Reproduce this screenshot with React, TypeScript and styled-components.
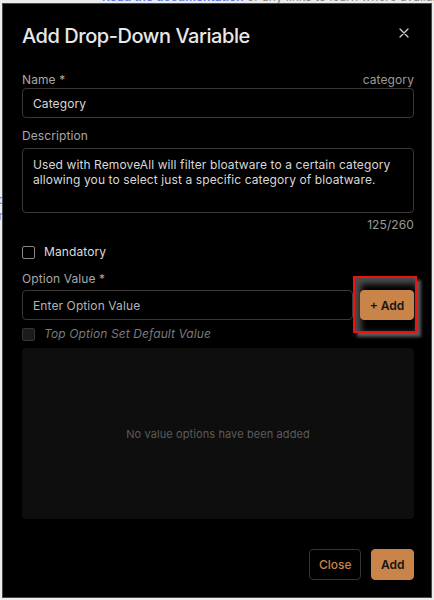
import React from "react";
import styled, { createGlobalStyle } from "styled-components";

const Global = createGlobalStyle`
  html, body { margin: 0; padding: 0; }
  body {
    background: #ececec;
    font-family: Inter, "Noto Sans", sans-serif;
    overflow: hidden;
  }
  * { box-sizing: border-box; }
`;

const ORANGE = "#c9844a";

const Backdrop = styled.div`
  height: 600px;
  background: #ececec;
  overflow: hidden;
  font-family: Inter, sans-serif;
  font-size: 12px;
`;

const TopLine = styled.p`
  margin: -10px 0 0 102px;
  white-space: nowrap;
  color: #888;
  line-height: 14px;
`;

const Link = styled.span`
  color: #5a78e8;
  font-weight: 600;
`;

const SideText = styled.div`
  margin: 188px 0 0 -30px;
  color: #8a7ac8;
  line-height: 16px;
`;

const Modal = styled.div`
  position: fixed;
  top: 3px;
  left: 2px;
  width: 430px;
  height: 595px;
  background: #000;
  border: 1px solid #4a4a4a;
  padding: 18px 17px 0 19px;
  display: flex;
  flex-direction: column;
  color: #ddd;
  letter-spacing: 0.1px;
`;

const Header = styled.div`
  display: flex;
  justify-content: space-between;
  align-items: flex-start;
  margin-bottom: 22px;
`;

const Title = styled.h2`
  margin: 0;
  font-size: 20px;
  line-height: 28px;
  font-weight: 500;
  color: #e8e8e8;
  letter-spacing: -0.45px;
`;

const CloseIcon = styled.button`
  border: 0;
  background: none;
  padding: 0;
  margin: 6px 5px 0 0;
  width: 10px;
  height: 10px;
  display: flex;
  cursor: pointer;
`;

const LabelRow = styled.div<{ $mb: number }>`
  display: flex;
  justify-content: space-between;
  margin-bottom: ${(p) => p.$mb}px;
`;

const Label = styled.label`
  font-size: 12px;
  line-height: 16px;
  color: #a8a8a8;
`;

const Hint = styled.span`
  font-size: 12px;
  line-height: 16px;
  color: #9a9a9a;
`;

const Input = styled.input`
  display: block;
  width: 100%;
  height: 30px;
  background: #000;
  border: 1px solid #3b3835;
  border-radius: 4px;
  padding: 0 10px;
  font-family: Inter, sans-serif;
  font-size: 12px;
  letter-spacing: 0.1px;
  color: #d8d8d8;
  outline: none;
  &::placeholder { color: #b4b4b4; }
`;

const TextArea = styled.textarea`
  display: block;
  width: 100%;
  height: 65px;
  background: #000;
  border: 1px solid #3b3835;
  border-radius: 4px;
  padding: 8px 10px;
  font-family: Inter, sans-serif;
  font-size: 12px;
  letter-spacing: 0.1px;
  line-height: 15px;
  color: #d8d8d8;
  resize: none;
  outline: none;
`;

const Field = styled.div<{ $mt: number }>`
  margin-top: ${(p) => p.$mt}px;
`;

const Counter = styled.div`
  text-align: right;
  font-size: 12px;
  line-height: 16px;
  color: #9a9a9a;
  margin-top: 4px;
`;

const CheckRow = styled.label<{ $mt: number; $disabled?: boolean }>`
  display: flex;
  align-items: center;
  gap: 9px;
  margin-top: ${(p) => p.$mt}px;
  font-size: 12px;
  line-height: 16px;
  color: ${(p) => (p.$disabled ? "#7a7a7a" : "#dcdcdc")};
  font-style: ${(p) => (p.$disabled ? "italic" : "normal")};
`;

const Box = styled.span<{ $disabled?: boolean }>`
  width: 13px;
  height: 13px;
  border-radius: 2px;
  border: 1px solid ${(p) => (p.$disabled ? "#343434" : "#8d8680")};
  background: ${(p) => (p.$disabled ? "#1b1b1b" : "#000")};
  flex: none;
`;

const OptionRow = styled.div`
  display: flex;
  align-items: stretch;
  gap: 7px;
`;

const AddCell = styled.div`
  position: relative;
  display: flex;
`;

const Highlight = styled.span`
  position: absolute;
  top: -14px;
  left: -7px;
  right: -3px;
  bottom: -13px;
  border: 2px solid #ee1111;
  box-shadow: 4px 4px 3px rgba(105, 105, 105, 0.85),
    inset 4px 4px 6px 2px rgba(85, 85, 85, 0.9);
  pointer-events: none;
`;

const Button = styled.button<{ $variant: "solid" | "outline" }>`
  position: relative;
  height: 30px;
  padding: 0 ${(p) => (p.$variant === "outline" ? 9 : 8.5)}px;
  border-radius: 4px;
  font-family: Inter, sans-serif;
  font-size: 12px;
  font-weight: ${(p) => (p.$variant === "outline" ? 500 : 600)};
  cursor: pointer;
  border: 1px solid ${(p) => (p.$variant === "outline" ? "#353535" : ORANGE)};
  background: ${(p) => (p.$variant === "outline" ? "#000" : ORANGE)};
  color: ${(p) => (p.$variant === "outline" ? ORANGE : "#141414")};
`;

const SmallAdd = styled(Button)`
  width: 54px;
  padding: 0;
`;

const EmptyBox = styled.div`
  margin-top: 6px;
  height: 171px;
  background: #0e0e0e;
  border-radius: 4px;
  display: flex;
  align-items: center;
  justify-content: center;
  font-size: 11px;
  color: #5c5c5c;
`;

const Footer = styled.div`
  display: flex;
  justify-content: flex-end;
  gap: 10px;
  margin-top: 30px;
`;

const FooterButton = styled(Button)`
  height: 31px;
`;

export default function App() {
  return (
    <>
      <Global />
      <Backdrop>
        <TopLine>
          <Link>Read the documentation</Link> or any links to learn where available in the editor
        </TopLine>
        <SideText>
          variables
          <br />
          options
        </SideText>
      </Backdrop>
      <Modal role="dialog">
        <Header>
          <Title>Add Drop-Down Variable</Title>
          <CloseIcon aria-label="Close">
            <svg width="10" height="10" viewBox="0 0 10 10">
              <path d="M1 1 L9 9 M9 1 L1 9" stroke="#cfcfcf" strokeWidth="1.3" strokeLinecap="round" />
            </svg>
          </CloseIcon>
        </Header>

        <LabelRow $mb={0}>
          <Label>Name *</Label>
          <Hint>category</Hint>
        </LabelRow>
        <Input defaultValue="Category" />

        <Field $mt={10}>
          <LabelRow $mb={4}>
            <Label>Description</Label>
          </LabelRow>
          <TextArea defaultValue="Used with RemoveAll will filter bloatware to a certain category allowing you to select just a specific category of bloatware." />
          <Counter>125/260</Counter>
        </Field>

        <CheckRow $mt={11}>
          <Box />
          Mandatory
        </CheckRow>

        <Field $mt={11}>
          <LabelRow $mb={3}>
            <Label>Option Value *</Label>
          </LabelRow>
          <OptionRow>
            <Input placeholder="Enter Option Value" />
            <AddCell>
              <Highlight />
              <SmallAdd $variant="solid">+ Add</SmallAdd>
            </AddCell>
          </OptionRow>
        </Field>

        <CheckRow $mt={6} $disabled>
          <Box $disabled />
          Top Option Set Default Value
        </CheckRow>

        <EmptyBox>No value options have been added</EmptyBox>

        <Footer>
          <FooterButton $variant="outline">Close</FooterButton>
          <FooterButton $variant="solid">Add</FooterButton>
        </Footer>
      </Modal>
    </>
  );
}
